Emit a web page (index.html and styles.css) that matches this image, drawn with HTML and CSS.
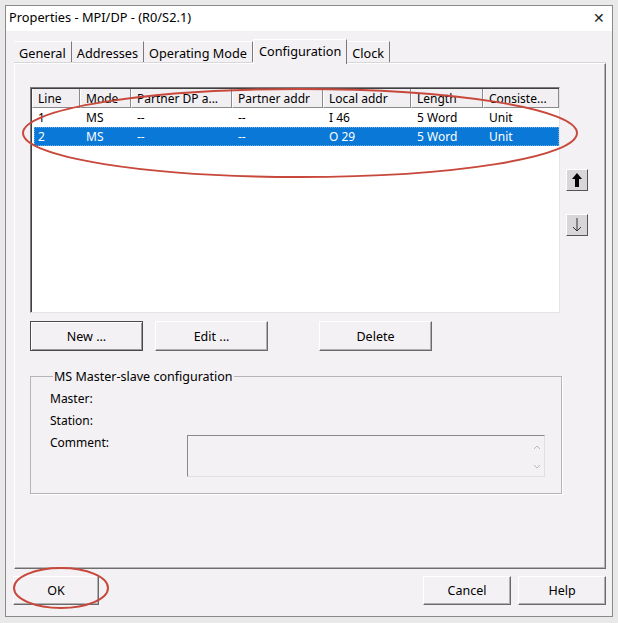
FILE: index.html
```html
<!DOCTYPE html>
<html lang="en">
<head>
    <meta charset="UTF-8">
    <title>Properties - MPI/DP - (R0/S2.1)</title>
    <link rel="stylesheet" href="styles.css">
</head>
<body>
    <div class="window">
        <div class="titlebar">
            <span class="title">Properties - MPI/DP - (R0/S2.1)</span>
            <span class="close">&#x2715;</span>
        </div>

        <div class="tabs">
            <div class="tab">General</div>
            <div class="tab">Addresses</div>
            <div class="tab">Operating Mode</div>
            <div class="tab active">Configuration</div>
            <div class="tab">Clock</div>
        </div>

        <div class="panel">
            <div class="list-row">
                <div class="list">
                    <div class="lv-head">
                        <div class="col c1">Line</div>
                        <div class="col c2">Mode</div>
                        <div class="col c3">Partner DP a...</div>
                        <div class="col c4">Partner addr</div>
                        <div class="col c5">Local addr</div>
                        <div class="col c6">Length</div>
                        <div class="col c7">Consiste...</div>
                    </div>
                    <div class="lv-row">
                        <div class="col c1">1</div>
                        <div class="col c2">MS</div>
                        <div class="col c3">--</div>
                        <div class="col c4">--</div>
                        <div class="col c5">I 46</div>
                        <div class="col c6">5 Word</div>
                        <div class="col c7">Unit</div>
                    </div>
                    <div class="lv-row selected">
                        <div class="col c1">2</div>
                        <div class="col c2">MS</div>
                        <div class="col c3">--</div>
                        <div class="col c4">--</div>
                        <div class="col c5">O 29</div>
                        <div class="col c6">5 Word</div>
                        <div class="col c7">Unit</div>
                    </div>
                </div>
                <div class="side">
                    <div class="arrow-btn up">
                        <svg width="12" height="16" viewBox="0 0 12 16"><path d="M6 1 L11 7 L8 7 L8 15 L4 15 L4 7 L1 7 Z" fill="#000"/></svg>
                    </div>
                    <div class="arrow-btn down">
                        <svg width="12" height="16" viewBox="0 0 12 16"><path d="M6 1 V14 M2 10 L6 14 L10 10" fill="none" stroke="#333" stroke-width="1"/></svg>
                    </div>
                </div>
            </div>

            <div class="btn-row">
                <button class="btn default">New ...</button>
                <button class="btn">Edit ...</button>
                <button class="btn delete">Delete</button>
            </div>

            <fieldset class="group">
                <legend>MS Master-slave configuration</legend>
                <div class="field">Master:</div>
                <div class="field">Station:</div>
                <div class="field comment-row">
                    <span>Comment:</span>
                    <div class="comment-box">
                        <div class="scroll">
                            <svg width="8" height="6" viewBox="0 0 8 6"><path d="M1 5 L4 2 L7 5" fill="none" stroke="#b8b8b8" stroke-width="1"/></svg>
                            <svg width="8" height="6" viewBox="0 0 8 6"><path d="M1 1 L4 4 L7 1" fill="none" stroke="#b8b8b8" stroke-width="1"/></svg>
                        </div>
                    </div>
                </div>
            </fieldset>
        </div>

        <div class="footer">
            <button class="btn ok">OK</button>
            <div class="spacer"></div>
            <button class="btn">Cancel</button>
            <button class="btn">Help</button>
        </div>
    </div>

    <!-- red markup drawn over the dialog -->
    <svg class="markup" width="618" height="623" viewBox="0 0 618 623">
        <ellipse cx="300" cy="133" rx="277" ry="44" fill="none" stroke="#c8483c" stroke-width="2"/>
        <ellipse cx="61" cy="588" rx="47" ry="20" fill="none" stroke="#c8483c" stroke-width="2"/>
    </svg>
</body>
</html>
```

FILE: styles.css
```css
* {
    margin: 0;
    padding: 0;
    box-sizing: border-box;
}

body {
    width: 618px;
    height: 623px;
    overflow: hidden;
    background-color: #e9e9e9;
    font-family: "Noto Sans", "Open Sans", sans-serif;
    font-size: 12px;
    color: #000;
    position: relative;
    padding: 5px 0 0 5px;
}

.window {
    width: 608px;
    height: 612px;
    border: 1px solid #8a8a8a;
    background-color: #f4f1f4;
    display: flex;
    flex-direction: column;
}

.titlebar {
    height: 22px;
    background-color: #fff;
    display: flex;
    align-items: center;
    justify-content: space-between;
    padding: 0 7px 0 3px;
    box-shadow: 0 3px 0 #fff;
}

.title {
    font-size: 12.8px;
}

.close {
    font-size: 14px;
    color: #222;
    font-weight: 300;
}

.tabs {
    display: flex;
    align-items: flex-end;
    height: 35px;
    padding-left: 8px;
}

.tab {
    height: 22px;
    padding: 0 5px;
    display: flex;
    align-items: center;
    border-top: 1px solid #fff;
    border-right: 1px solid #7a7a7a;
    font-size: 12.7px;
}

.tab.active {
    height: 25px;
    padding-bottom: 3px;
    border-left: 1px solid #fff;
    background-color: #f4f1f4;
    position: relative;
    z-index: 1;
    margin-bottom: -1px;
}

.panel {
    height: 506px;
    width: 592px;
    margin-left: 8px;
    border-top: 1px solid #fff;
    border-left: 1px solid #fff;
    border-right: 1px solid #6d6d6d;
    border-bottom: 1px solid #6d6d6d;
    box-shadow: inset -1px -1px 0 #b4b4b4, 0 -1px 0 #d9d6d9;
    padding: 23px 0 0 15px;
}

.list-row {
    display: flex;
    gap: 6px;
}

.list {
    width: 530px;
    height: 226px;
    background-color: #fff;
    border-top: 1px solid #7c7c7c;
    border-left: 1px solid #7c7c7c;
    border-right: 1px solid #e4e4e4;
    border-bottom: 1px solid #e4e4e4;
    box-shadow: inset 1px 1px 0 #404040;
    padding: 1px 0 0 1px;
}

.lv-head {
    display: flex;
    height: 19px;
    background-color: #f1eff1;
}

.lv-head .col {
    border-right: 1px solid #8a8a8a;
    border-left: 1px solid #fff;
    border-bottom: 1px solid #8a8a8a;
    height: 19px;
    padding-left: 5px;
    display: flex;
    align-items: center;
}

.lv-row {
    display: flex;
    height: 19px;
    align-items: center;
}

.lv-row .col {
    padding-left: 6px;
}

.lv-row.selected {
    background-color: #0a78d7;
    color: #fff;
    outline: 1px dotted #6aa8e0;
    outline-offset: -1px;
    margin: 0 0 0 2px;
    width: 525px;
}

.lv-row.selected .c1 {
    width: 46px;
    padding-left: 4px;
}

.col {
    white-space: nowrap;
    overflow: hidden;
}

.c1 { width: 48px; }
.c2 { width: 51px; }
.c3 { width: 101px; }
.c4 { width: 91px; }
.c5 { width: 88px; }
.c6 { width: 72px; }
.c7 { width: 76px; }

.side {
    display: flex;
    flex-direction: column;
    padding-top: 82px;
    gap: 23px;
}

.arrow-btn {
    width: 22px;
    height: 22px;
    background-color: #d8d6d8;
    border-top: 1px solid #fff;
    border-left: 1px solid #fff;
    border-right: 1px solid #555;
    border-bottom: 1px solid #555;
    display: flex;
    align-items: center;
    justify-content: center;
}

.btn {
    font-family: inherit;
    font-size: 12.5px;
    color: #000;
    background-color: #f4f1f4;
    border-top: 1px solid #fff;
    border-left: 1px solid #fff;
    border-right: 1px solid #6a6a6a;
    border-bottom: 1px solid #6a6a6a;
    box-shadow: inset -1px -1px 0 #b0b0b0;
    width: 113px;
    height: 30px;
}

.btn.default {
    border: 1px solid #4a4a4a;
    box-shadow: inset 1px 1px 0 #fff, inset -1px -1px 0 #9a9a9a;
}

.btn-row {
    display: flex;
    gap: 12px;
    margin-top: 8px;
}

.btn.delete {
    margin-left: 39px;
}

.group {
    width: 532px;
    height: 126px;
    margin-top: 17px;
    border: 1px solid #b5b5b5;
    box-shadow: 1px 1px 0 #fff;
    padding: 2px 0 0 19px;
}

.group legend {
    margin-left: 3px;
    padding: 0 1px;
    font-size: 12.5px;
}

.field {
    height: 22px;
    display: flex;
    align-items: center;
}

.comment-row {
    align-items: flex-start;
    height: 44px;
    padding-top: 3px;
}

.comment-row span {
    width: 137px;
}

.comment-box {
    width: 358px;
    height: 42px;
    margin-top: 1px;
    border-top: 1px solid #8a8a8a;
    border-left: 1px solid #8a8a8a;
    border-right: 1px solid #e0e0e0;
    border-bottom: 1px solid #e0e0e0;
    display: flex;
    justify-content: flex-end;
}

.scroll {
    width: 14px;
    display: flex;
    flex-direction: column;
    justify-content: space-between;
    align-items: center;
    padding: 8px 0 6px;
}

.footer {
    display: flex;
    gap: 7px;
    margin-top: 7px;
    padding: 0 6px 0 7px;
}

.footer .btn {
    width: 88px;
    height: 29px;
}

.footer .btn.ok {
    width: 86px;
}

.spacer {
    flex: 1;
}

.markup {
    position: absolute;
    left: 0;
    top: 0;
    pointer-events: none;
}
```
